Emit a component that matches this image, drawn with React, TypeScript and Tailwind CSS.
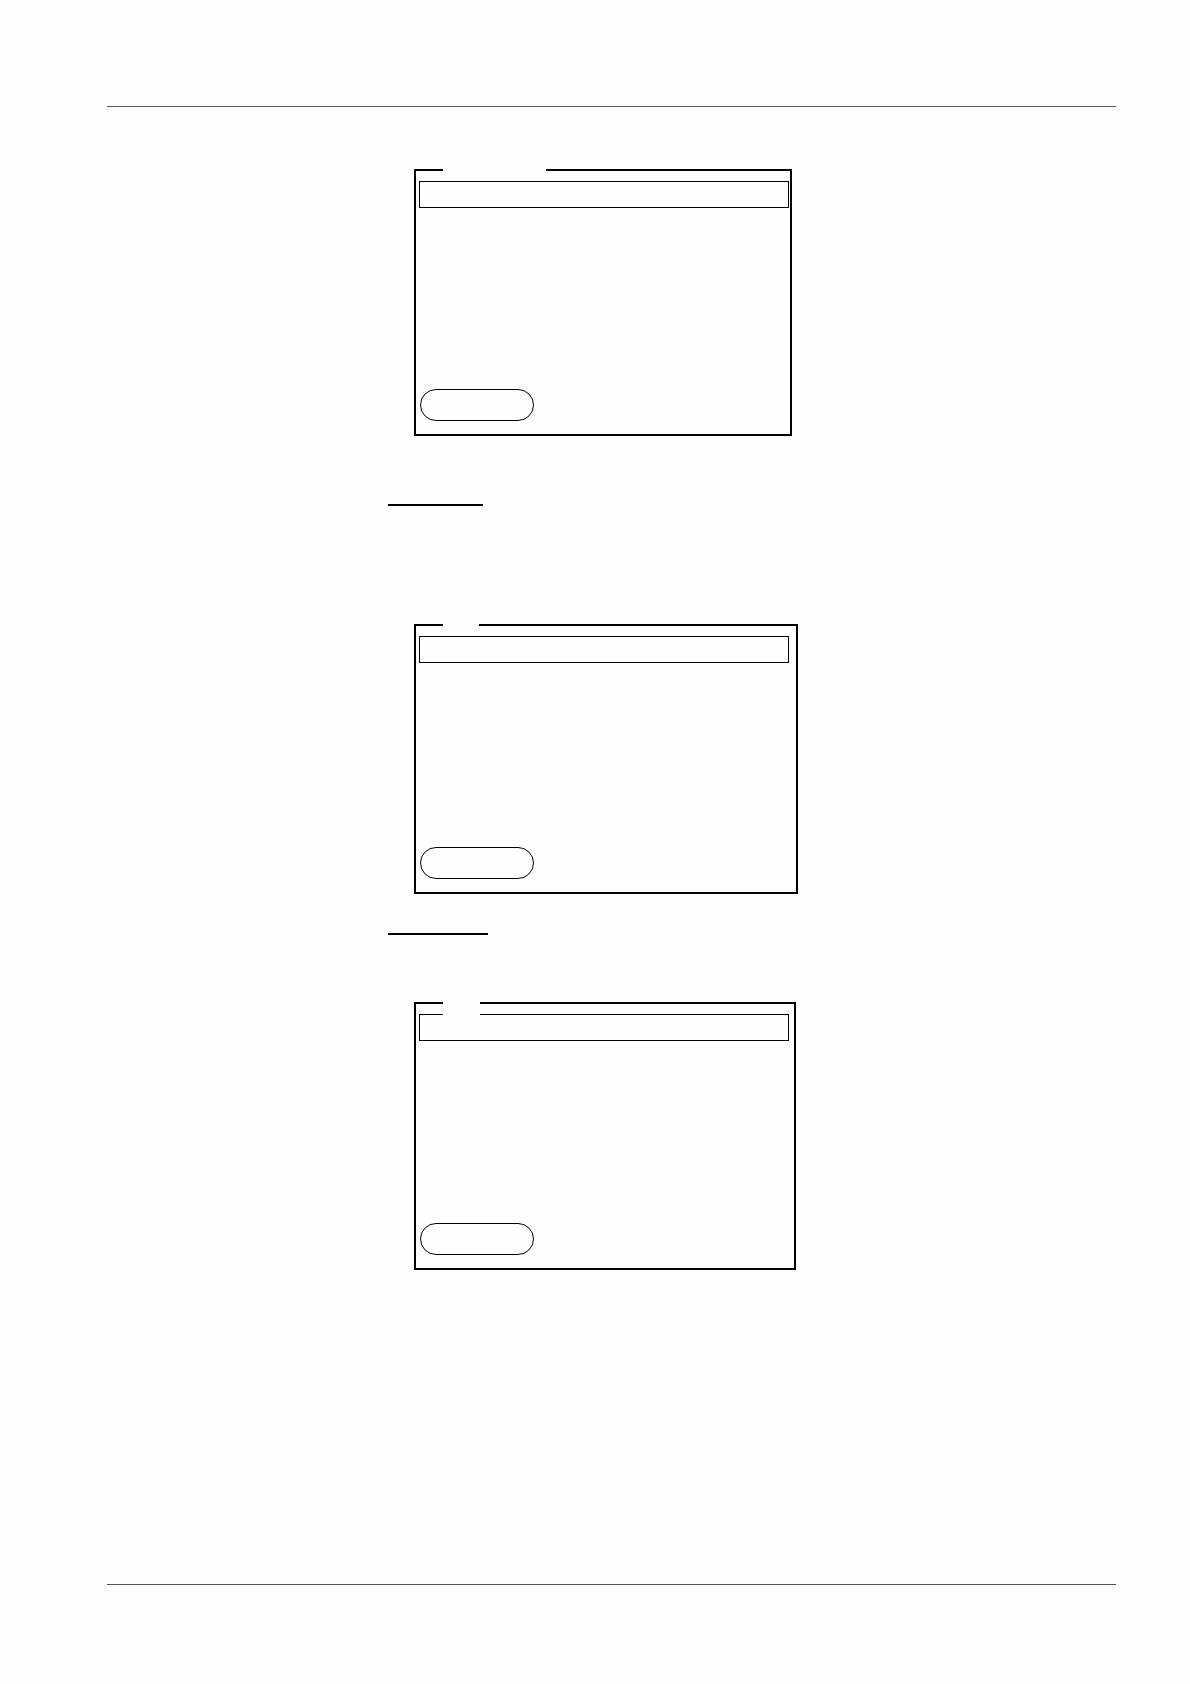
import clsx from 'clsx';

interface DisplayPanelProps {
  name: string;
  className: string;
  titleClassName: string;
}

function DisplayPanel({ name, className, titleClassName }: DisplayPanelProps) {
  return (
    <section
      aria-label={name}
      className={clsx(
        'relative ml-[26px] flex flex-col items-start justify-between border-2 border-black pt-[10px] pb-[13px] pl-[3px]',
        className,
      )}
    >
      <input
        type="text"
        readOnly
        aria-label={`${name} selected line`}
        className="h-[27px] w-[370px] border border-black bg-transparent outline-none"
      />
      {/* Blank title slot that interrupts the frame */}
      <div className={clsx('absolute -top-[2px] left-[27px] bg-[#fefefe]', titleClassName)} />
      <button
        type="button"
        aria-label={`${name} action`}
        className="ml-px h-8 w-[114px] rounded-full border border-black"
      />
    </section>
  );
}

export default function App() {
  return (
    <div className="flex min-h-screen flex-col bg-[#fefefe] pt-[106px] pr-[74px] pb-[99px] pl-[107px] font-['Liberation_Sans',sans-serif]">
      <hr className="border-[#555555]" />

      <main className="pt-[62px] pb-16 pl-[281px]">
        <DisplayPanel name="First display" className="h-[267px] w-[378px]" titleClassName="h-1 w-[103px]" />

        <hr className="mt-[68px] w-[95px] border-t-2 border-black" />

        <DisplayPanel name="Second display" className="mt-[118px] h-[270px] w-[384px]" titleClassName="h-1 w-9" />

        <hr className="mt-[39px] w-[100px] border-t-2 border-black" />

        {/* The taller slot also cuts the line of the selected row */}
        <DisplayPanel name="Third display" className="mt-[67px] h-[268px] w-[382px]" titleClassName="h-4 w-[37px]" />
      </main>

      <hr className="mt-auto border-[#555555]" />
    </div>
  );
}
